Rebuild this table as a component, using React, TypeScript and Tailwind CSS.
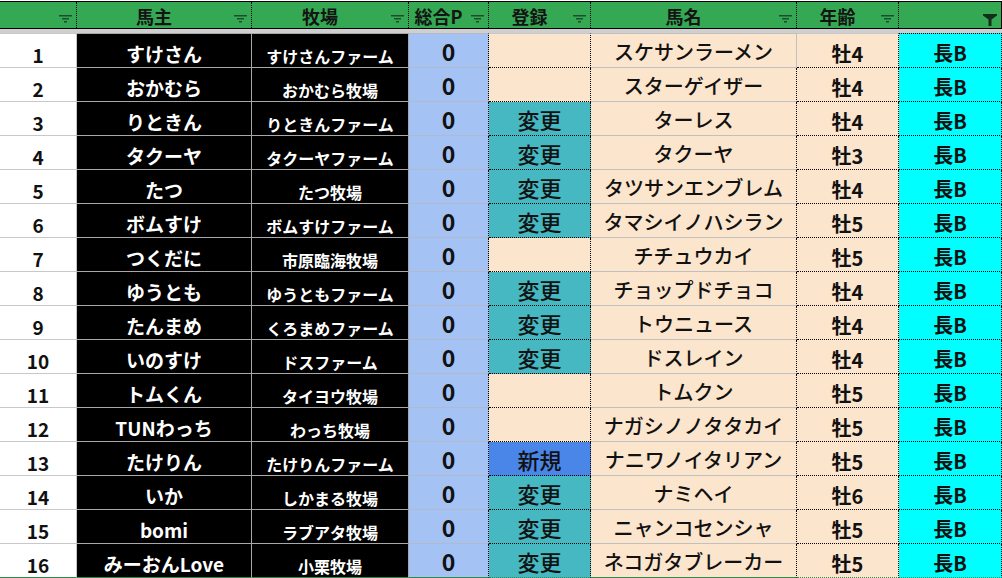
import React from 'react';

type Row = {
  no: number;
  owner: string;
  farm: string;
  pts: number;
  reg: '' | '変更' | '新規';
  horse: string;
  age: string;
  dist: string;
};

const rows: Row[] = [
  { no: 1, owner: 'すけさん', farm: 'すけさんファーム', pts: 0, reg: '', horse: 'スケサンラーメン', age: '牡4', dist: '長B' },
  { no: 2, owner: 'おかむら', farm: 'おかむら牧場', pts: 0, reg: '', horse: 'スターゲイザー', age: '牡4', dist: '長B' },
  { no: 3, owner: 'りときん', farm: 'りときんファーム', pts: 0, reg: '変更', horse: 'ターレス', age: '牡4', dist: '長B' },
  { no: 4, owner: 'タクーヤ', farm: 'タクーヤファーム', pts: 0, reg: '変更', horse: 'タクーヤ', age: '牡3', dist: '長B' },
  { no: 5, owner: 'たつ', farm: 'たつ牧場', pts: 0, reg: '変更', horse: 'タツサンエンブレム', age: '牡4', dist: '長B' },
  { no: 6, owner: 'ボムすけ', farm: 'ボムすけファーム', pts: 0, reg: '変更', horse: 'タマシイノハシラン', age: '牡5', dist: '長B' },
  { no: 7, owner: 'つくだに', farm: '市原臨海牧場', pts: 0, reg: '', horse: 'チチュウカイ', age: '牡5', dist: '長B' },
  { no: 8, owner: 'ゆうとも', farm: 'ゆうともファーム', pts: 0, reg: '変更', horse: 'チョップドチョコ', age: '牡4', dist: '長B' },
  { no: 9, owner: 'たんまめ', farm: 'くろまめファーム', pts: 0, reg: '変更', horse: 'トウニュース', age: '牡4', dist: '長B' },
  { no: 10, owner: 'いのすけ', farm: 'ドスファーム', pts: 0, reg: '変更', horse: 'ドスレイン', age: '牡4', dist: '長B' },
  { no: 11, owner: 'トムくん', farm: 'タイヨウ牧場', pts: 0, reg: '', horse: 'トムクン', age: '牡5', dist: '長B' },
  { no: 12, owner: 'TUNわっち', farm: 'わっち牧場', pts: 0, reg: '', horse: 'ナガシノノタタカイ', age: '牡5', dist: '長B' },
  { no: 13, owner: 'たけりん', farm: 'たけりんファーム', pts: 0, reg: '新規', horse: 'ナニワノイタリアン', age: '牡5', dist: '長B' },
  { no: 14, owner: 'いか', farm: 'しかまる牧場', pts: 0, reg: '変更', horse: 'ナミヘイ', age: '牡6', dist: '長B' },
  { no: 15, owner: 'bomi', farm: 'ラブアタ牧場', pts: 0, reg: '変更', horse: 'ニャンコセンシャ', age: '牡5', dist: '長B' },
  { no: 16, owner: 'みーおんLove', farm: '小栗牧場', pts: 0, reg: '変更', horse: 'ネコガタブレーカー', age: '牡5', dist: '長B' },
];

const GRID = 'grid grid-cols-[77px_175px_157px_80px_102px_206px_102px_103px]';

const FilterIcon = () => (
  <svg width="13" height="8" viewBox="0 0 13 8" className="absolute right-[4px] top-[13px]">
    <rect x="0" y="0" width="13" height="1.5" fill="#1d4d2b" />
    <rect x="3" y="3" width="7" height="1.5" fill="#1d4d2b" />
    <rect x="5" y="6" width="3" height="1.5" fill="#1d4d2b" />
  </svg>
);

const FunnelIcon = () => (
  <svg width="14" height="12" viewBox="0 0 14 12" className="absolute right-[4px] top-[12px]">
    <path d="M0 0h14v1.5L8.5 5.5V12h-3V5.5L0 1.5z" fill="#142e1c" />
  </svg>
);

const HeadCell = ({ label, last }: { label?: string; last?: boolean }) => (
  <div
    className={`relative h-[26px] bg-[#34a853] border-r border-black ${last ? '' : 'border-dotted'} flex items-center justify-center pr-5 text-[18px] font-bold text-[#141414] leading-none`}
  >
    {label && <span className="pt-[1px]">{label}</span>}
    {last ? <FunnelIcon /> : <FilterIcon />}
  </div>
);

const regBg = (r: Row['reg']) =>
  r === '変更' ? 'bg-[#45b8c1]' : r === '新規' ? 'bg-[#4a86e8]' : 'bg-[#fce5cd]';

export default function App() {
  return (
    <div className="w-[1002px] h-[578px] overflow-hidden bg-white font-['Noto_Sans_CJK_JP','Noto_Sans',sans-serif]">
      <div className="h-px bg-white" />
      <div className={`${GRID} border-y border-black`}>
        <HeadCell />
        <HeadCell label="馬主" />
        <HeadCell label="牧場" />
        <HeadCell label="総合P" />
        <HeadCell label="登録" />
        <HeadCell label="馬名" />
        <HeadCell label="年齢" />
        <HeadCell last />
      </div>
      <div className="h-[4px] bg-[#cfcfcf]" />

      <div>
        {rows.map((r, i) => {
          const first = i === 0;
          const lastRow = i === rows.length - 1;
          const h = first ? 'h-[35px] border-t' : 'h-[34px]';
          const bottom = lastRow ? 'border-b-[#2f8a4a]' : '';
          const base = `${h} border-b border-r flex items-center justify-center leading-none whitespace-nowrap`;
          return (
            <div key={r.no} className={GRID}>
              <div className={`${base} bg-white border-[#c8c8c8] ${bottom} text-[19px] font-bold text-[#111] pt-[7px]`}>
                {r.no}
              </div>
              <div className={`${base} bg-black border-[#a8a8a8] ${bottom} text-[19px] font-bold text-white pt-[6px]`}>
                {r.owner}
              </div>
              <div className={`${base} bg-black border-[#a8a8a8] ${bottom} text-[16px] font-bold text-white pt-[10px]`}>
                {r.farm}
              </div>
              <div className={`${base} bg-[#a4c2f4] border-[#b3b9c8] border-r-black [border-right-style:dotted] ${bottom} text-[23px] font-bold text-[#111] pt-[1px]`}>
                {r.pts}
              </div>
              <div className={`${base} ${regBg(r.reg)} border-black border-dotted ${bottom} ${first ? 'border-t-[#c8c8c8] [border-top-style:solid]' : ''} text-[22px] font-medium text-[#111] pt-[1px]`}>
                {r.reg}
              </div>
              <div className={`${base} bg-[#fce5cd] border-[#c0c0c0] ${first ? '' : 'border-r-black [border-right-style:dotted]'} ${bottom} text-[20px] font-medium text-[#111] pt-[3px]`}>
                {r.horse}
              </div>
              <div className={`${base} bg-[#fce5cd] border-black border-dotted ${first ? 'border-t-[#c8c8c8] [border-top-style:solid]' : ''} ${bottom} text-[20px] font-bold text-[#111] pt-[6px]`}>
                {r.age}
              </div>
              <div className={`${base} bg-[#00ffff] border-black border-dotted ${bottom} text-[20px] font-bold text-[#111] pt-[5px]`}>
                {r.dist}
              </div>
            </div>
          );
        })}
      </div>
    </div>
  );
}
